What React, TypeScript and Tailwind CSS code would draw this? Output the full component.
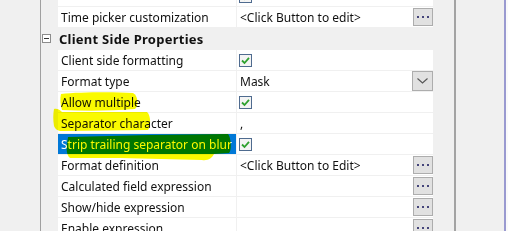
import React from "react";

function Checkbox() {
  return (
    <div className="ml-[2px] flex h-[13px] w-[13px] shrink-0 items-center justify-center border border-[#4f6b8f] bg-[#f4f4f4]">
      <svg width="11" height="11" viewBox="0 0 11 11">
        <path d="M2 5.5 L4.5 8 L9 2.8" fill="none" stroke="#2fa12f" strokeWidth="1.8" />
      </svg>
    </div>
  );
}

function EllipsisBtn() {
  return (
    <div className="ml-auto flex h-[18px] w-[20px] shrink-0 items-center justify-center gap-[3px] self-start mt-px border border-[#adadad] bg-[#e1e1e1]">
      <div className="h-[2px] w-[2px] bg-[#45457a]" />
      <div className="h-[2px] w-[2px] bg-[#45457a]" />
      <div className="h-[2px] w-[2px] bg-[#45457a]" />
    </div>
  );
}

function DropBtn() {
  return (
    <div className="ml-auto flex h-[20px] w-[21px] shrink-0 items-center justify-center border border-[#adadad] bg-[#e1e1e1]">
      <svg width="11" height="6" viewBox="0 0 11 6">
        <path d="M0.5 0.5 L5.5 5 L10.5 0.5" fill="none" stroke="#555" strokeWidth="1.1" />
      </svg>
    </div>
  );
}

type RowProps = {
  label?: string;
  value?: React.ReactNode;
  selected?: boolean;
};

function Row({ label, value, selected }: RowProps) {
  return (
    <div className="flex h-5 shrink-0">
      <div className="w-[17px] shrink-0" />
      <div
        className={
          "flex w-[178px] shrink-0 items-center whitespace-nowrap pl-[3px] pt-[2px] " +
          (selected ? "bg-[#0078d7] text-white" : "bg-white text-[#111]")
        }
      >
        {label}
      </div>
      <div className="ml-px flex w-[196px] shrink-0 items-center whitespace-nowrap bg-white text-[#111]">
        {value}
      </div>
    </div>
  );
}

export default function App() {
  return (
    <div className="relative flex h-[231px] w-[508px] overflow-hidden bg-[#f0f0f0] font-['Noto_Sans',sans-serif] text-[12px] leading-none">
      <div className="w-[40px] shrink-0" />
      <div className="w-px shrink-0 bg-[#a0a0a0]" />
      <div className="-mt-[14px] flex w-[392px] shrink-0 flex-col gap-px">
        <Row label="" value={<Checkbox />} />
        <Row
          label="Time picker customization"
          value={
            <>
              <span className="pl-[3px] pt-[2px]">&lt;Click Button to edit&gt;</span>
              <EllipsisBtn />
            </>
          }
        />
        <div className="flex h-[21px] shrink-0 items-center">
          <div className="flex w-[17px] shrink-0 items-center pl-px">
            <div className="flex h-[9px] w-[9px] items-center justify-center border border-[#8c8c8c] bg-white">
              <div className="h-px w-[5px] bg-[#333]" />
            </div>
          </div>
          <span className="pl-[1px] pt-[2px] text-[13px] font-bold tracking-[0.25px] text-[#111]">Client Side Properties</span>
        </div>
        <Row label="Client side formatting" value={<Checkbox />} />
        <Row
          label="Format type"
          value={
            <>
              <span className="pl-[3px] pt-[2px]">Mask</span>
              <DropBtn />
            </>
          }
        />
        <Row label="Allow multiple" value={<Checkbox />} />
        <Row label="Separator character" value={<span className="pl-[3px] pt-[2px]">,</span>} />
        <Row label="Strip trailing separator on blur" selected value={<Checkbox />} />
        <Row
          label="Format definition"
          value={
            <>
              <span className="pl-[3px] pt-[2px]">&lt;Click Button to Edit&gt;</span>
              <EllipsisBtn />
            </>
          }
        />
        <Row label="Calculated field expression" value={<EllipsisBtn />} />
        <Row label="Show/hide expression" value={<EllipsisBtn />} />
        <Row label="Enable expression" value={<EllipsisBtn />} />
      </div>
      <div className="w-[21px] shrink-0" />
      <div className="w-[2px] shrink-0 bg-[#a3a3a3]" />
      <div className="w-[48px] shrink-0" />
      <div className="w-[2px] shrink-0 bg-[#9a9ad0]" />
      <div className="flex-1 bg-[#fafafa]" />

      <svg
        className="pointer-events-none absolute left-0 top-0 mix-blend-multiply"
        width="508"
        height="231"
        viewBox="0 0 508 231"
      >
        <path
          d="M61 94 C80 92 115 92 133 93 C138 95 139 106 135 109 C110 111 85 111 62 110 C60 104 60 98 61 94 Z"
          fill="#fafa00"
        />
        <path
          d="M54 109 C57 108 60 110 62 112 L147 112 C151 115 151 127 148 130 L62 131 C58 131 55 129 54 126 C53 120 53 114 54 109 Z"
          fill="#fafa00"
        />
        <path
          d="M68 137 L150 135 L228 134 C231 137 232 150 229 153 L214 154 C212 158 208 161 202 160 L120 158 L70 158 C67 156 66 150 67 144 Z"
          fill="#fafa00"
        />
      </svg>
    </div>
  );
}
